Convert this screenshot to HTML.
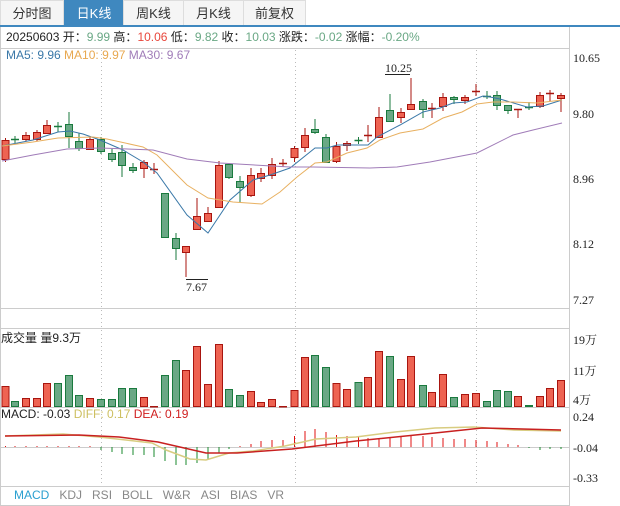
<!DOCTYPE html>
<html><head><meta charset="utf-8"><style>
*{margin:0;padding:0;box-sizing:border-box}
body{width:620px;height:506px;background:#fff;position:relative;overflow:hidden;font-family:"Liberation Sans","Noto Sans CJK SC",sans-serif}
.tab{position:absolute;top:0;height:25px;background:#f5f5f5;border:1px solid #ddd;border-bottom:none;font-size:13px;color:#333;text-align:center;line-height:25px}
.tab.on{background:#3f88bf;color:#fff;border-color:#3f88bf}
.t{position:absolute;font-size:12px;white-space:nowrap}
.ax{position:absolute;font-family:"Liberation Serif","Noto Serif CJK SC",serif;font-size:12px;color:#222;left:573px}
</style></head><body>
<div class="tab" style="left:0;width:64px">分时图</div>
<div class="tab on" style="left:64px;width:60px">日K线</div>
<div class="tab" style="left:123px;width:61px">周K线</div>
<div class="tab" style="left:183px;width:61px">月K线</div>
<div class="tab" style="left:243px;width:63px">前复权</div>
<div style="position:absolute;left:0;top:25px;width:620px;height:2px;background:#3f88bf"></div>
<svg id="s" width="620" height="506" style="position:absolute;left:0;top:0"></svg>
<div class="t" style="left:6px;top:28px;color:#222">20250603 开：<span style="color:#6aa885">9.99</span> 高：<span style="color:#e8473c">10.06</span> 低：<span style="color:#6aa885">9.82</span> 收：<span style="color:#6aa885">10.03</span> 涨跌：<span style="color:#6aa885">-0.02</span> 涨幅：<span style="color:#6aa885">-0.20%</span></div>
<div class="t" style="left:6px;top:48px"><span style="color:#3a78a8">MA5: 9.96</span> <span style="color:#e8a850">MA10: 9.97</span> <span style="color:#a07cb8">MA30: 9.67</span></div>
<div class="t" style="left:1px;top:329px;color:#222">成交量 量9.3万</div>
<div class="t" style="left:1px;top:407px;color:#222">MACD: -0.03 <span style="color:#cdbf60">DIFF: 0.17</span> <span style="color:#d02020">DEA: 0.19</span></div>
<div class="t" style="left:14px;top:488px;color:#888;word-spacing:0"><span style="color:#2a9fd0">MACD</span>&nbsp;&nbsp;&nbsp;KDJ&nbsp;&nbsp;&nbsp;RSI&nbsp;&nbsp;&nbsp;BOLL&nbsp;&nbsp;&nbsp;W&amp;R&nbsp;&nbsp;&nbsp;ASI&nbsp;&nbsp;&nbsp;BIAS&nbsp;&nbsp;&nbsp;VR</div>
<div class="ax" style="top:51px">10.65</div>
<div class="ax" style="top:107px">9.80</div>
<div class="ax" style="top:172px">8.96</div>
<div class="ax" style="top:237px">8.12</div>
<div class="ax" style="top:293px">7.27</div>
<div class="ax" style="top:331px">19万</div>
<div class="ax" style="top:362px">11万</div>
<div class="ax" style="top:391px">4万</div>
<div class="ax" style="top:410px">0.24</div>
<div class="ax" style="top:441px">-0.04</div>
<div class="ax" style="top:471px">-0.33</div>
<div class="t" style="left:186px;top:280px;font-family:'Liberation Serif',serif;color:#222">7.67</div>
<div class="t" style="left:385px;top:61px;font-family:'Liberation Serif',serif;color:#222">10.25</div>
<script>
var s=document.getElementById('s'),h='';
function L(x1,y1,x2,y2,c,w,d){h+='<line x1="'+x1+'" y1="'+y1+'" x2="'+x2+'" y2="'+y2+'" stroke="'+c+'" stroke-width="'+(w||1)+'"'+(d?' stroke-dasharray="1,3"':'')+'/>';}
function P(pts,c,w){h+='<polyline fill="none" stroke="'+c+'" stroke-width="'+(w||1)+'" points="'+pts+'"/>';}
L(0.5,27,0.5,506,'#ccc');L(569.5,27,569.5,506,'#ccc');
[48.5,308.5,328.5,407.5,447.5,486.5,505.5].forEach(function(y){L(0,y,570,y,'#ccc');});
[101.5,295.5,476.5].forEach(function(x){L(x,50,x,486,'#bbb',1,1);});
L(186,279.5,208,279.5,'#222');L(385,74.5,410,74.5,'#222');
var C=[[5.5,159,140,138,162,1],[15,139,139,136,143,0],[26,139,135,132,141,1],[37,139,132,130,141,1],[47,133,125,120,134,1],[58,126,126,122,132,0],[69,124,136,112,148,0],[79,141,148,133,151,0],[90,149,139,136,149,1],[101,139,151,137,154,0],[112,153,159,149,162,0],[122,152,165,145,177,0],[133,167,170,163,173,0],[144,168,162,160,178,1],[154,169,169,163,174,1],[165,193,237,193,238,0],[176,238,248,233,260,0],[186,252,246,246,277,1],[197,229,216,198,229,1],[208,221,213,207,222,1],[219,207,165,161,208,1],[229,164,177,164,179,0],[240,181,187,176,202,0],[251,195,175,168,197,1],[261,178,173,168,182,1],[272,175,164,158,179,1],[283,163,163,159,167,1],[294.5,157,148,146,162,1],[305,147,135,128,152,1],[315,129,132,119,134,0],[326,137,162,134,163,0],[336.5,161,146,142,163,1],[347,145,143,141,151,1],[358.5,140,140,137,144,0],[368,135,135,125,142,1],[379,137,117,107,138,1],[390,110,121,94,122,0],[401,117,112,108,123,1],[411,109,104,78,109,1],[423,101,109,99,118,0],[432,108,108,103,118,1],[443,106,97,93,111,1],[454,97,99,96,104,0],[465,100,97,95,104,1],[476,91,91,84,96,1],[487,96,96,91,99,0],[497,95,105,91,110,0],[508,105,110,105,114,0],[518,109,109,109,118,1],[529,107,107,102,110,0],[540,106,95,92,108,1],[550,93,93,90,101,1],[561,98,95,93,112,1]];
var V=[386,401,398,398,383,383,375,395,398,399,399,388,388,397,406,375,360,370,346,384,344,389,395,391,402,399,406,390,357,355,367,383,389,382,377,351,356,379,356,385,392,374,397,394,393,401,390,391,396,405,396,388,380];
var M=[1,1,1,1,1,1,1,1,1,-3,-5,-7,-8,-8,-10,-14,-18,-18,-16,-12,-6,-2,1,3,6,7,7,11,16,18,15,12,11,11,9,9,10,10,11,11,10,9,8,8,7,6,5,3,2,-1,-3,-2,-2];
C.forEach(function(c,i){
 var x=c[0],up=c[5],st=up?'#a8150f':'#1a7a3e',fi=up?'#ee6352':'#6aa885';
 L(x,c[3],x,c[4],st);
 var t=Math.min(c[1],c[2]),b=Math.max(c[1],c[2]);
 if(b-t<2)L(x-4,t+0.5,x+4,t+0.5,st,1.5);
 else h+='<rect x="'+(x-3.5)+'" y="'+(t+0.5)+'" width="7" height="'+(b-t)+'" fill="'+fi+'" stroke="'+st+'"/>';
 var vt=V[i];h+='<rect x="'+(x-3.5)+'" y="'+(vt+0.5)+'" width="7" height="'+Math.max(407-vt-1,0.5)+'" fill="'+fi+'" stroke="'+st+'"/>';
 var m=M[i];L(x,447,x,447-m,m>0?'#e01010':'#1a8a2e');
});
P('2,146 33,140 58,132 70,131 83,134 100,140 123,150 143,162 157,173 187,215 208,233 230,200 253,180 270,175 290,168 315,148 327,148 337,145 368,145 377,137 400,125 423,112 440,108 453,103 467,102 483,96 490,97 500,99 527,107 543,106 562,100','#3a78a8');
P('2,146 33,142 58,138 93,137 107,139 143,147 157,155 187,185 208,198 233,202 262,204 280,192 297,177 315,163 327,162 347,153 367,148 380,140 400,133 423,129 443,118 462,112 477,104 493,102 513,102 537,103 562,100','#e8b060');
P('2,161 33,155 67,149 100,148 153,150 187,159 220,163 290,167 313,167 370,168 397,167 430,162 477,153 513,135 533,130 562,123','#a07cb8');
P('5,436 63,434 99,437 152,443 166,450 190,459 206,460 229,453 253,451 285,446 316,439 356,437 395,432 435,428 474,427 514,430 561,431','#d8cc80',1.5);
P('5,436 79,435 119,437 158,442 206,453 237,453 292,449 356,441 435,433 482,428 561,430','#c82020',1.5);
s.innerHTML=h;
</script>
</body></html>
